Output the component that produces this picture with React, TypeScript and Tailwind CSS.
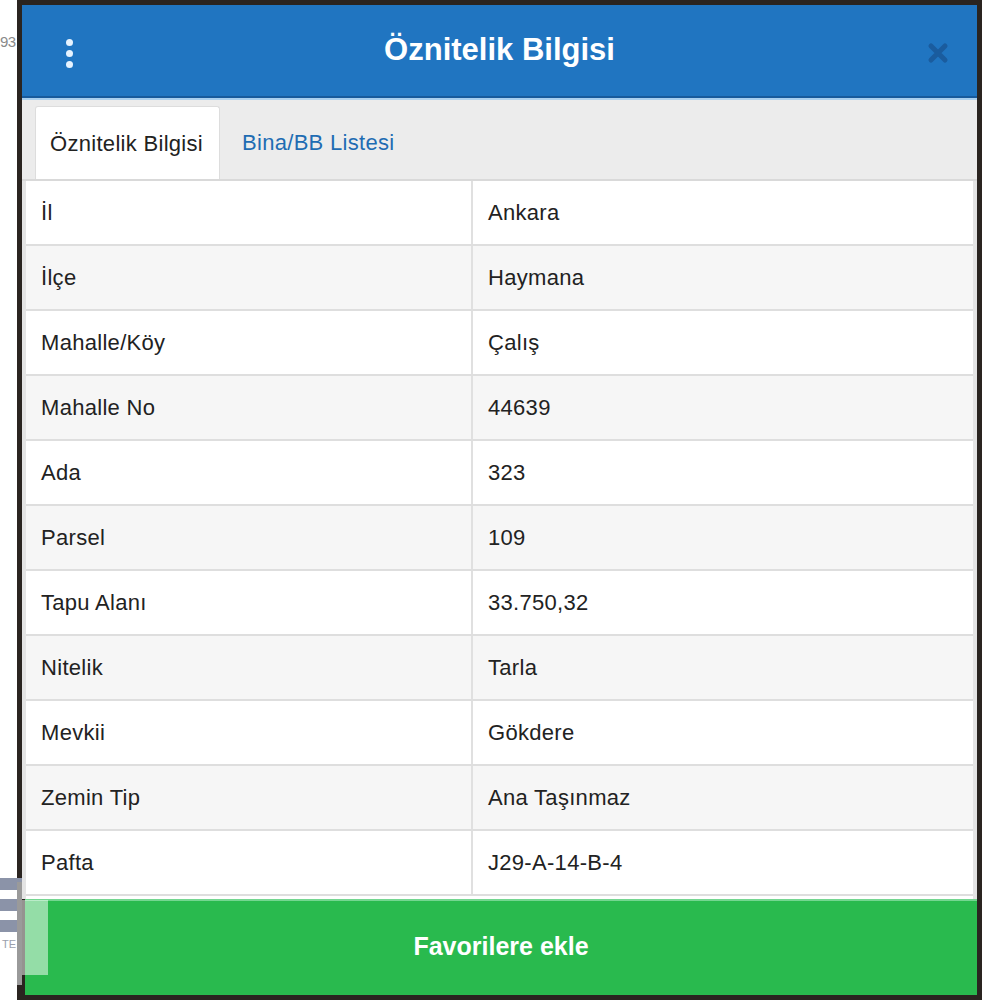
import React from "react";

const rows: [string, string][] = [
  ["İl", "Ankara"],
  ["İlçe", "Haymana"],
  ["Mahalle/Köy", "Çalış"],
  ["Mahalle No", "44639"],
  ["Ada", "323"],
  ["Parsel", "109"],
  ["Tapu Alanı", "33.750,32"],
  ["Nitelik", "Tarla"],
  ["Mevkii", "Gökdere"],
  ["Zemin Tip", "Ana Taşınmaz"],
  ["Pafta", "J29-A-14-B-4"],
];

export default function App() {
  return (
    <div
      className="relative w-[1000px] h-[1000px] bg-white overflow-hidden"
      style={{ fontFamily: '"Liberation Sans", Arial, sans-serif' }}
    >
      {/* left text */}
      <div className="absolute left-0 top-[33px] w-[17px] text-[15px] leading-[18px] text-[#8a8a8a] tracking-[-0.5px]">
        93
      </div>

      {/* modal frame */}
      <div className="ml-[17px] w-[965px] h-[1000px] bg-[#2a2420] p-[5px]">
        <div className="flex flex-col h-[990px]">
          {/* header */}
          <div className="relative h-[91px] bg-[#2075c1] flex items-center justify-center">
            <div className="absolute left-[44px] top-[34px] flex flex-col gap-[4px]">
              <span className="w-[7px] h-[7px] rounded-full bg-[#e6f3ff]" />
              <span className="w-[7px] h-[7px] rounded-full bg-[#e6f3ff]" />
              <span className="w-[7px] h-[7px] rounded-full bg-[#e6f3ff]" />
            </div>
            <div className="text-white font-bold text-[31px] leading-none tracking-[0px] mt-[-2px]">
              Öznitelik Bilgisi
            </div>
            <svg
              className="absolute right-[28px] top-[37px]"
              width="22"
              height="22"
              viewBox="0 0 22 22"
            >
              <path
                d="M4 4 L18 18 M18 4 L4 18"
                stroke="#1a5c9e"
                strokeWidth="5"
                strokeLinecap="round"
              />
            </svg>
          </div>
          <div className="h-[2px] bg-[#175a9c]" />
          <div className="h-[2px] bg-[#a9cfee]" />

          {/* tabs */}
          <div className="h-[81px] bg-[#ececec] border-b-2 border-[#d9d9d9] pl-[13px] pt-[6px] flex items-end">
            <div className="h-[73px] w-[185px] bg-white border border-b-0 border-[#dddddd] rounded-t-[3px] flex items-center pl-[14px] text-[22px] tracking-[0.3px] text-[#222]">
              Öznitelik Bilgisi
            </div>
            <div className="h-[73px] flex items-center pl-[22px] text-[22px] tracking-[0.3px] text-[#1f6cb3]">
              Bina/BB Listesi
            </div>
          </div>

          {/* table */}
          <div className="flex-1 bg-[#e4e4e4] px-[4px]">
            <div className="bg-white h-full">
              {rows.map(([k, v], i) => (
                <div
                  key={k}
                  className={
                    "grid grid-cols-[447px_1fr] h-[65px] border-b-2 border-[#dedede] text-[22px] tracking-[0.3px] text-[#222] " +
                    (i % 2 === 1 ? "bg-[#f6f6f6]" : "bg-white")
                  }
                >
                  <div className="flex items-center pl-[15px] border-r-2 border-[#e0e0e0]">{k}</div>
                  <div className="flex items-center pl-[15px]">{v}</div>
                </div>
              ))}
            </div>
          </div>

          {/* green button */}
          <div className="h-[96px] ml-[3px] bg-[#29ba4e] border-t-2 border-[#74d690] flex items-center justify-center">
            <span className="text-white font-bold text-[25px] tracking-[0px] mt-[-2px]">Favorilere ekle</span>
          </div>
        </div>
      </div>

      {/* left overlay widget */}
      <div className="absolute left-0 top-[878px] w-[22px] h-[105px] bg-white">
        <div className="h-[12px] bg-[#8b93a8]" />
        <div className="h-[12px] bg-[#8b93a8] mt-[9px]" />
        <div className="h-[12px] bg-[#8b93a8] mt-[9px]" />
        <div className="text-[11px] leading-[14px] text-[#9aa0ad] mt-[5px] pl-[2px]">TE</div>
      </div>
      <div className="absolute left-[17px] top-[882px] w-[5px] h-[103px] bg-[#9a9a9a]" />
      <div className="absolute left-[22px] top-[900px] w-[26px] h-[75px] bg-white/50" />
    </div>
  );
}
